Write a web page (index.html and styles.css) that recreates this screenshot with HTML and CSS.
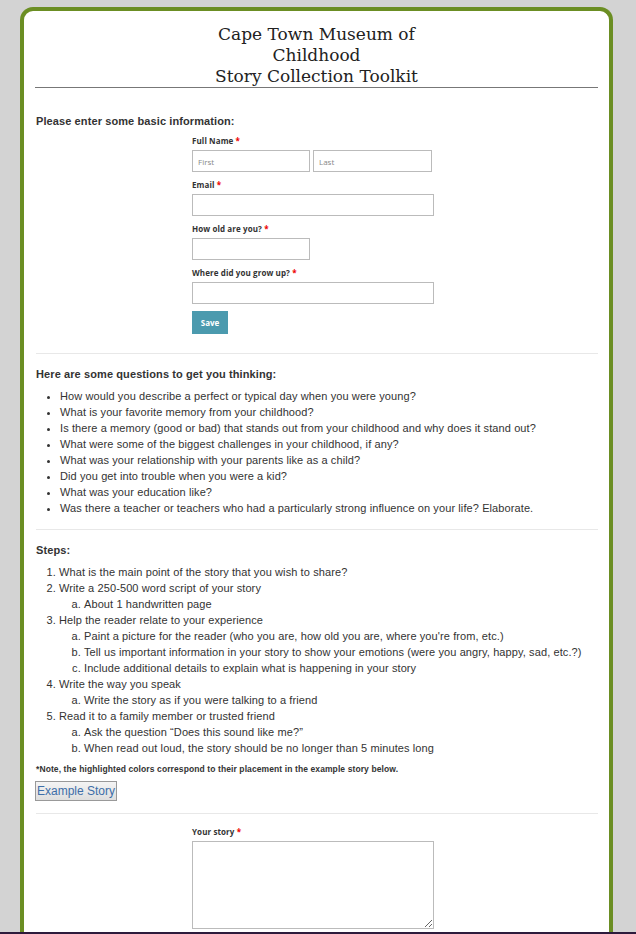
FILE: index.html
```html
<!DOCTYPE html>
<html>
<head>
<meta charset="utf-8">
<title>Story Collection Toolkit</title>
<link rel="stylesheet" href="styles.css">
</head>
<body>
<div class="page">
  <div class="card">
    <h1 class="title">Cape Town Museum of<br>Childhood<br>Story Collection Toolkit</h1>

    <section class="section info">
      <h2 class="heading">Please enter some basic information:</h2>
      <form class="form">
        <div class="field">
          <label class="label">Full Name <span class="req">*</span></label>
          <div class="name-row">
            <input class="input input-half" type="text" placeholder="First">
            <input class="input input-half" type="text" placeholder="Last">
          </div>
        </div>
        <div class="field">
          <label class="label">Email <span class="req">*</span></label>
          <input class="input input-full" type="text">
        </div>
        <div class="field">
          <label class="label">How old are you? <span class="req">*</span></label>
          <input class="input input-half" type="text">
        </div>
        <div class="field">
          <label class="label">Where did you grow up? <span class="req">*</span></label>
          <input class="input input-full" type="text">
        </div>
        <button class="save" type="button">Save</button>
      </form>
    </section>

    <hr class="divider">

    <section class="section questions">
      <h2 class="heading">Here are some questions to get you thinking:</h2>
      <ul class="bullets">
        <li>How would you describe a perfect or typical day when you were young?</li>
        <li>What is your favorite memory from your childhood?</li>
        <li>Is there a memory (good or bad) that stands out from your childhood and why does it stand out?</li>
        <li>What were some of the biggest challenges in your childhood, if any?</li>
        <li>What was your relationship with your parents like as a child?</li>
        <li>Did you get into trouble when you were a kid?</li>
        <li>What was your education like?</li>
        <li>Was there a teacher or teachers who had a particularly strong influence on your life? Elaborate.</li>
      </ul>
    </section>

    <hr class="divider">

    <section class="section steps">
      <h2 class="heading">Steps:</h2>
      <ol class="steps-list">
        <li>What is the main point of the story that you wish to share?</li>
        <li>Write a 250-500 word script of your story
          <ol class="sub-list">
            <li>About 1 handwritten page</li>
          </ol>
        </li>
        <li>Help the reader relate to your experience
          <ol class="sub-list">
            <li>Paint a picture for the reader (who you are, how old you are, where you're from, etc.)</li>
            <li>Tell us important information in your story to show your emotions (were you angry, happy, sad, etc.?)</li>
            <li>Include additional details to explain what is happening in your story</li>
          </ol>
        </li>
        <li>Write the way you speak
          <ol class="sub-list">
            <li>Write the story as if you were talking to a friend</li>
          </ol>
        </li>
        <li>Read it to a family member or trusted friend
          <ol class="sub-list">
            <li>Ask the question “Does this sound like me?”</li>
            <li>When read out loud, the story should be no longer than 5 minutes long</li>
          </ol>
        </li>
      </ol>
      <p class="note">*Note, the highlighted colors correspond to their placement in the example story below.</p>
      <button class="example" type="button">Example Story</button>
    </section>

    <hr class="divider">

    <section class="section story">
      <div class="form">
        <div class="field">
          <label class="label">Your story <span class="req">*</span></label>
          <textarea class="textarea"></textarea>
        </div>
      </div>
    </section>
  </div>
</div>
<div class="bottom-bar"></div>
</body>
</html>
```

FILE: styles.css
```css
html, body {
  margin: 0;
  padding: 0;
  background: #d3d3d3;
}

body {
  font-family: "Liberation Sans", Arial, sans-serif;
  color: #333;
  font-size: 11px;
  letter-spacing: 0.1px;
}

.page {
  padding: 7px 23px 0 20px;
}

.card {
  background: #fff;
  border: 4px solid #6b8e23;
  border-bottom: none;
  border-radius: 13px 13px 0 0;
  padding: 0 11px 40px 12px;
}

.title {
  margin: 0 0 0 -1px;
  padding-top: 13px;
  font-family: "DejaVu Serif", serif;
  font-weight: normal;
  font-size: 17px;
  line-height: 21px;
  letter-spacing: 0;
  color: #222;
  text-align: center;
  border-bottom: 1px solid #777;
}

.section {
  margin: 0;
}

.heading {
  margin: 0;
  font-size: 11px;
  line-height: 16px;
  font-weight: bold;
  color: #333;
}

.info {
  padding-top: 25px;
}

.form {
  margin-left: 156px;
  width: 242px;
  display: flex;
  flex-direction: column;
  gap: 7px;
}

.info .form {
  margin-top: 6px;
}

.field {
  display: flex;
  flex-direction: column;
  gap: 3px;
}

.label {
  font-family: "Open Sans", sans-serif;
  font-size: 8px;
  font-weight: bold;
  line-height: 12px;
  letter-spacing: 0.1px;
  color: #333;
}

.req {
  color: #e00;
}

.name-row {
  display: flex;
  gap: 3px;
}

.input {
  box-sizing: border-box;
  height: 22px;
  margin: 0;
  border: 1px solid #bbb;
  border-radius: 0;
  padding: 0 5px;
  font-family: "Open Sans", sans-serif;
  font-size: 8px;
  background: #fff;
}

.input::placeholder {
  color: #888;
}

.input-half {
  width: 118px;
}

.name-row .input-half:last-child {
  width: 119px;
}

.input-full {
  width: 242px;
}

.save {
  align-self: flex-start;
  width: 36px;
  height: 23px;
  padding: 0;
  border: none;
  background: #4b9aae;
  color: #fff;
  font-family: "Open Sans", sans-serif;
  font-size: 8px;
  font-weight: bold;
}

.divider {
  margin: 0;
  border: none;
  border-top: 1px solid #e8e8e8;
  height: 0;
}

.info + .divider {
  margin-top: 19px;
}

.questions {
  padding-top: 12px;
  padding-bottom: 13px;
}

.bullets {
  margin: 6px 0 0;
  padding-left: 24px;
  line-height: 16px;
  font-size: 11px;
}

.steps {
  padding-top: 12px;
  padding-bottom: 12px;
}

.steps-list {
  margin: 6px 0 0;
  padding-left: 23px;
  line-height: 16px;
}

.sub-list {
  margin: 0;
  padding-left: 25px;
  list-style-type: lower-alpha;
}

.note {
  margin: 7px 0 0;
  font-size: 8.5px;
  line-height: 12px;
  font-weight: bold;
  color: #333;
}

.example {
  display: block;
  margin-top: 6px;
  margin-left: -1px;
  height: 20px;
  width: 82px;
  padding: 0;
  border: 1px solid #999;
  border-radius: 0;
  background: linear-gradient(#f4f4f4, #dedede);
  color: #3d6ea8;
  font-family: "Liberation Sans", Arial, sans-serif;
  font-size: 12px;
  letter-spacing: 0;
}

.story {
  padding-top: 12px;
}

.textarea {
  box-sizing: border-box;
  width: 242px;
  height: 88px;
  margin: 0;
  border: 1px solid #bbb;
  border-radius: 0;
  resize: both;
}

.bottom-bar {
  position: fixed;
  left: 0;
  right: 0;
  bottom: 0;
  height: 2px;
  background: #2d1b3c;
}
```
